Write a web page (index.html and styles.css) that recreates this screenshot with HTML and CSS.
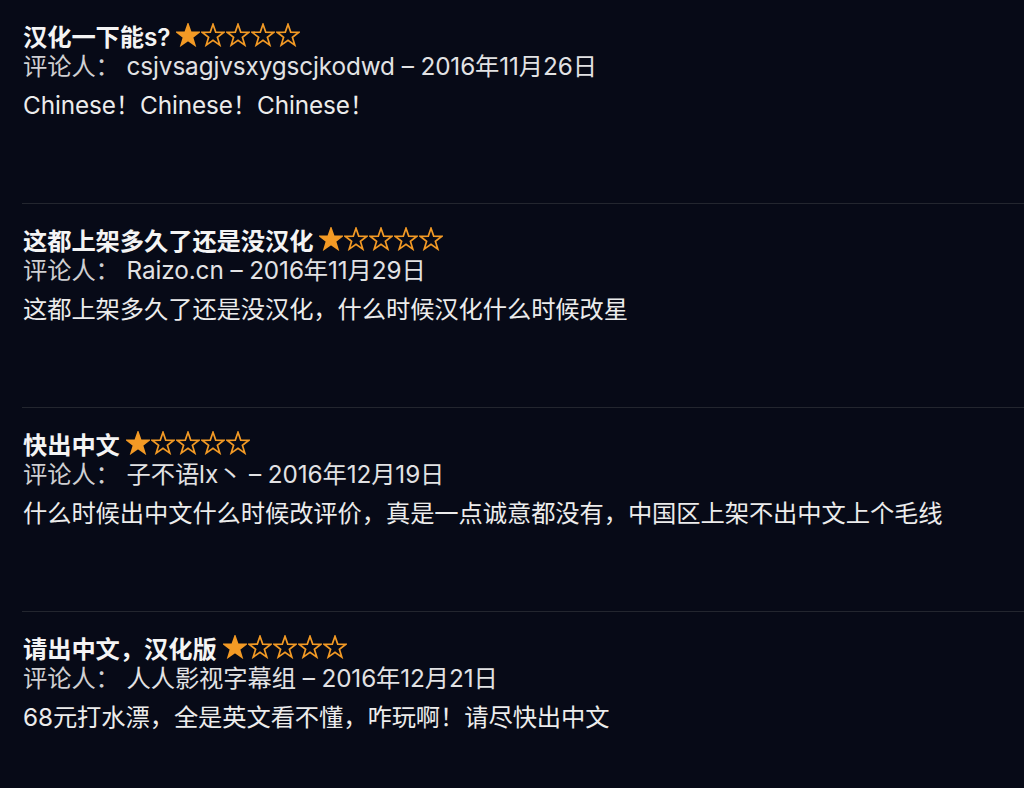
FILE: index.html
```html
<!DOCTYPE html>
<html lang="zh-CN">
<head>
    <meta charset="UTF-8">
    <title>评论</title>
    <link rel="stylesheet" href="styles.css">
</head>
<body>
<div class="reviews">
    <div class="review">
        <div class="title">汉化一下能s?
            <span class="stars">
                <svg viewBox="0 0 24 24" class="full"><polygon points="12,1.3 14.7,9.1 22.9,9.3 16.4,14.2 18.8,22.1 12,17.4 5.2,22.1 7.6,14.2 1.1,9.3 9.3,9.1"/></svg><svg viewBox="0 0 24 24"><polygon points="12,1.3 14.7,9.1 22.9,9.3 16.4,14.2 18.8,22.1 12,17.4 5.2,22.1 7.6,14.2 1.1,9.3 9.3,9.1"/></svg><svg viewBox="0 0 24 24"><polygon points="12,1.3 14.7,9.1 22.9,9.3 16.4,14.2 18.8,22.1 12,17.4 5.2,22.1 7.6,14.2 1.1,9.3 9.3,9.1"/></svg><svg viewBox="0 0 24 24"><polygon points="12,1.3 14.7,9.1 22.9,9.3 16.4,14.2 18.8,22.1 12,17.4 5.2,22.1 7.6,14.2 1.1,9.3 9.3,9.1"/></svg><svg viewBox="0 0 24 24"><polygon points="12,1.3 14.7,9.1 22.9,9.3 16.4,14.2 18.8,22.1 12,17.4 5.2,22.1 7.6,14.2 1.1,9.3 9.3,9.1"/></svg>
            </span>
        </div>
        <div class="meta"><span class="label">评论人：</span> csjvsagjvsxygscjkodwd – 2016年11月26日</div>
        <p class="body">Chinese！Chinese！Chinese！</p>
    </div>

    <div class="review">
        <div class="title">这都上架多久了还是没汉化
            <span class="stars">
                <svg viewBox="0 0 24 24" class="full"><polygon points="12,1.3 14.7,9.1 22.9,9.3 16.4,14.2 18.8,22.1 12,17.4 5.2,22.1 7.6,14.2 1.1,9.3 9.3,9.1"/></svg><svg viewBox="0 0 24 24"><polygon points="12,1.3 14.7,9.1 22.9,9.3 16.4,14.2 18.8,22.1 12,17.4 5.2,22.1 7.6,14.2 1.1,9.3 9.3,9.1"/></svg><svg viewBox="0 0 24 24"><polygon points="12,1.3 14.7,9.1 22.9,9.3 16.4,14.2 18.8,22.1 12,17.4 5.2,22.1 7.6,14.2 1.1,9.3 9.3,9.1"/></svg><svg viewBox="0 0 24 24"><polygon points="12,1.3 14.7,9.1 22.9,9.3 16.4,14.2 18.8,22.1 12,17.4 5.2,22.1 7.6,14.2 1.1,9.3 9.3,9.1"/></svg><svg viewBox="0 0 24 24"><polygon points="12,1.3 14.7,9.1 22.9,9.3 16.4,14.2 18.8,22.1 12,17.4 5.2,22.1 7.6,14.2 1.1,9.3 9.3,9.1"/></svg>
            </span>
        </div>
        <div class="meta"><span class="label">评论人：</span> Raizo.cn – 2016年11月29日</div>
        <p class="body">这都上架多久了还是没汉化，什么时候汉化什么时候改星</p>
    </div>

    <div class="review">
        <div class="title">快出中文
            <span class="stars">
                <svg viewBox="0 0 24 24" class="full"><polygon points="12,1.3 14.7,9.1 22.9,9.3 16.4,14.2 18.8,22.1 12,17.4 5.2,22.1 7.6,14.2 1.1,9.3 9.3,9.1"/></svg><svg viewBox="0 0 24 24"><polygon points="12,1.3 14.7,9.1 22.9,9.3 16.4,14.2 18.8,22.1 12,17.4 5.2,22.1 7.6,14.2 1.1,9.3 9.3,9.1"/></svg><svg viewBox="0 0 24 24"><polygon points="12,1.3 14.7,9.1 22.9,9.3 16.4,14.2 18.8,22.1 12,17.4 5.2,22.1 7.6,14.2 1.1,9.3 9.3,9.1"/></svg><svg viewBox="0 0 24 24"><polygon points="12,1.3 14.7,9.1 22.9,9.3 16.4,14.2 18.8,22.1 12,17.4 5.2,22.1 7.6,14.2 1.1,9.3 9.3,9.1"/></svg><svg viewBox="0 0 24 24"><polygon points="12,1.3 14.7,9.1 22.9,9.3 16.4,14.2 18.8,22.1 12,17.4 5.2,22.1 7.6,14.2 1.1,9.3 9.3,9.1"/></svg>
            </span>
        </div>
        <div class="meta"><span class="label">评论人：</span> 子不语lx丶 – 2016年12月19日</div>
        <p class="body">什么时候出中文什么时候改评价，真是一点诚意都没有，中国区上架不出中文上个毛线</p>
    </div>

    <div class="review">
        <div class="title">请出中文，汉化版
            <span class="stars">
                <svg viewBox="0 0 24 24" class="full"><polygon points="12,1.3 14.7,9.1 22.9,9.3 16.4,14.2 18.8,22.1 12,17.4 5.2,22.1 7.6,14.2 1.1,9.3 9.3,9.1"/></svg><svg viewBox="0 0 24 24"><polygon points="12,1.3 14.7,9.1 22.9,9.3 16.4,14.2 18.8,22.1 12,17.4 5.2,22.1 7.6,14.2 1.1,9.3 9.3,9.1"/></svg><svg viewBox="0 0 24 24"><polygon points="12,1.3 14.7,9.1 22.9,9.3 16.4,14.2 18.8,22.1 12,17.4 5.2,22.1 7.6,14.2 1.1,9.3 9.3,9.1"/></svg><svg viewBox="0 0 24 24"><polygon points="12,1.3 14.7,9.1 22.9,9.3 16.4,14.2 18.8,22.1 12,17.4 5.2,22.1 7.6,14.2 1.1,9.3 9.3,9.1"/></svg><svg viewBox="0 0 24 24"><polygon points="12,1.3 14.7,9.1 22.9,9.3 16.4,14.2 18.8,22.1 12,17.4 5.2,22.1 7.6,14.2 1.1,9.3 9.3,9.1"/></svg>
            </span>
        </div>
        <div class="meta"><span class="label">评论人：</span> 人人影视字幕组 – 2016年12月21日</div>
        <p class="body">68元打水漂，全是英文看不懂，咋玩啊！请尽快出中文</p>
    </div>
</div>
</body>
</html>
```

FILE: styles.css
```css
* {
  box-sizing: border-box;
}

body {
  margin: 0;
  background-color: #070a17;
  color: #ededed;
  font-family: Inter, "Noto Sans CJK SC", sans-serif;
  font-size: 24.3px;
  letter-spacing: -0.1px;
  overflow: hidden;
}

.reviews {
  margin-left: 22px;
}

.review {
  padding: 19px 0 82px 1px;
  border-top: 1px solid #23262f;
}

.review:first-child {
  border-top: none;
}

.title {
  display: flex;
  align-items: center;
  height: 32px;
  font-weight: 600;
  color: #f4f4f4;
}

.stars {
  display: flex;
  margin-left: 6px;
  gap: 1px;
}

.stars svg {
  width: 24px;
  height: 24px;
  fill: none;
  stroke: #f39a25;
  stroke-width: 1.7;
  stroke-linejoin: miter;
}

.stars svg.full {
  fill: #f39a25;
}

.meta {
  height: 31px;
  line-height: 31px;
  color: #e2e2e4;
}

.label {
  color: #cfcfd2;
}

.body {
  margin: 7px 0 0;
  line-height: 32px;
  color: #ececec;
}
```
